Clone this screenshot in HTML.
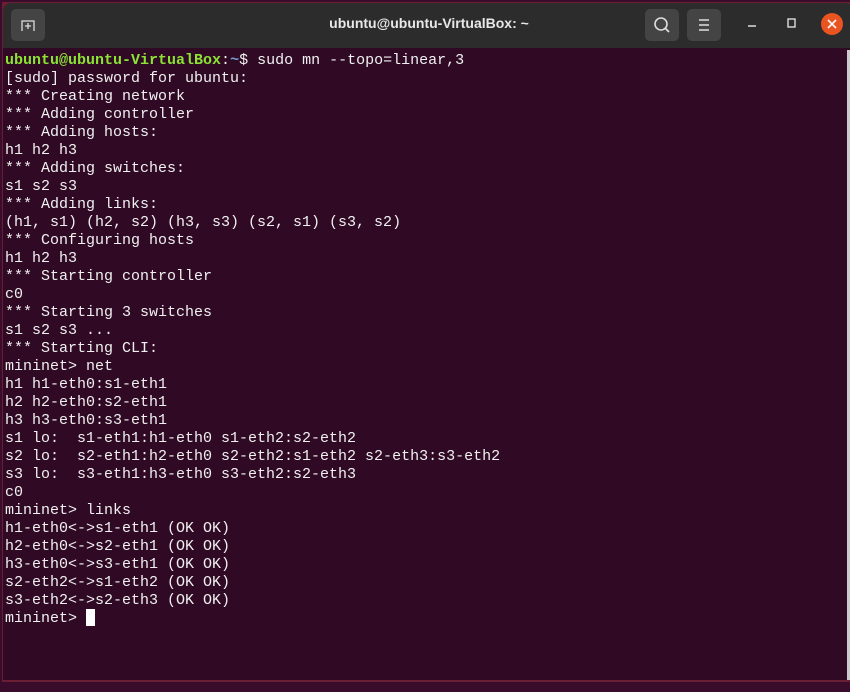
<!DOCTYPE html>
<html><head><style>
*{margin:0;padding:0;box-sizing:border-box}
body{width:850px;height:692px;overflow:hidden;background:#3a0c2c;position:relative;font-family:"Liberation Sans",sans-serif}
.win{position:absolute;left:2px;top:2px;width:850px;height:680px;background:#6a1d33}
.tb{position:absolute;left:3px;top:3px;width:850px;height:45px;background:#2c2c2c;border-radius:8px 8px 0 0}
.btn{position:absolute;top:9px;width:34px;height:32px;background:#444;border-radius:5px}
.title{position:absolute;left:0;width:858px;top:15px;text-align:center;color:#e8e8e8;font-weight:bold;font-size:14px}
.term{position:absolute;left:3px;top:48px;width:850px;height:632px;background:#300a24}
pre{position:absolute;left:5px;top:52px;font-family:"Liberation Mono",monospace;font-size:15px;line-height:18px;color:#f0f0f0;letter-spacing:0}
.g{color:#8ae234;font-weight:bold}.b{color:#729fcf;font-weight:bold}
.cur{display:inline-block;width:9px;height:17px;background:#fff;vertical-align:top;margin-top:-1px}
</style></head><body>
<div class="win"></div>
<div class="tb"></div>
<div class="btn" style="left:11px"><svg width="34" height="32"><path d="M11 22v-10h12v10" fill="none" stroke="#ddd" stroke-width="1.3"/><path d="M17 14v6M14 17h6" stroke="#ddd" stroke-width="1.3"/></svg></div>
<div class="btn" style="left:645px"><svg width="34" height="32"><circle cx="16" cy="15" r="6" fill="none" stroke="#ddd" stroke-width="1.6"/><path d="M20 19l4 4" stroke="#ddd" stroke-width="1.8"/></svg></div>
<div class="btn" style="left:687px"><svg width="34" height="32"><path d="M12 11h10M12 16h10M12 21h10" stroke="#ddd" stroke-width="1.4"/></svg></div>
<div class="title">ubuntu@ubuntu-VirtualBox: ~</div>
<svg style="position:absolute;left:740px;top:10px" width="110" height="30"><path d="M8 16h8" stroke="#ddd" stroke-width="1.5"/><rect x="48" y="9" width="7" height="8" fill="none" stroke="#ddd" stroke-width="1.4"/><circle cx="92" cy="14" r="11" fill="#e95420"/><path d="M88 10l8 8M96 10l-8 8" stroke="#fff" stroke-width="1.6"/></svg>
<div class="term"></div>
<div style="position:absolute;left:847px;top:50px;width:3px;height:630px;background:#ccc"></div>
<pre><span class="g">ubuntu@ubuntu-VirtualBox</span>:<span class="b">~</span>$ sudo mn --topo=linear,3
[sudo] password for ubuntu:
*** Creating network
*** Adding controller
*** Adding hosts:
h1 h2 h3
*** Adding switches:
s1 s2 s3
*** Adding links:
(h1, s1) (h2, s2) (h3, s3) (s2, s1) (s3, s2)
*** Configuring hosts
h1 h2 h3
*** Starting controller
c0
*** Starting 3 switches
s1 s2 s3 ...
*** Starting CLI:
mininet&gt; net
h1 h1-eth0:s1-eth1
h2 h2-eth0:s2-eth1
h3 h3-eth0:s3-eth1
s1 lo:  s1-eth1:h1-eth0 s1-eth2:s2-eth2
s2 lo:  s2-eth1:h2-eth0 s2-eth2:s1-eth2 s2-eth3:s3-eth2
s3 lo:  s3-eth1:h3-eth0 s3-eth2:s2-eth3
c0
mininet&gt; links
h1-eth0&lt;-&gt;s1-eth1 (OK OK)
h2-eth0&lt;-&gt;s2-eth1 (OK OK)
h3-eth0&lt;-&gt;s3-eth1 (OK OK)
s2-eth2&lt;-&gt;s1-eth2 (OK OK)
s3-eth2&lt;-&gt;s2-eth3 (OK OK)
mininet&gt; <span class="cur"></span></pre>
</body></html>
